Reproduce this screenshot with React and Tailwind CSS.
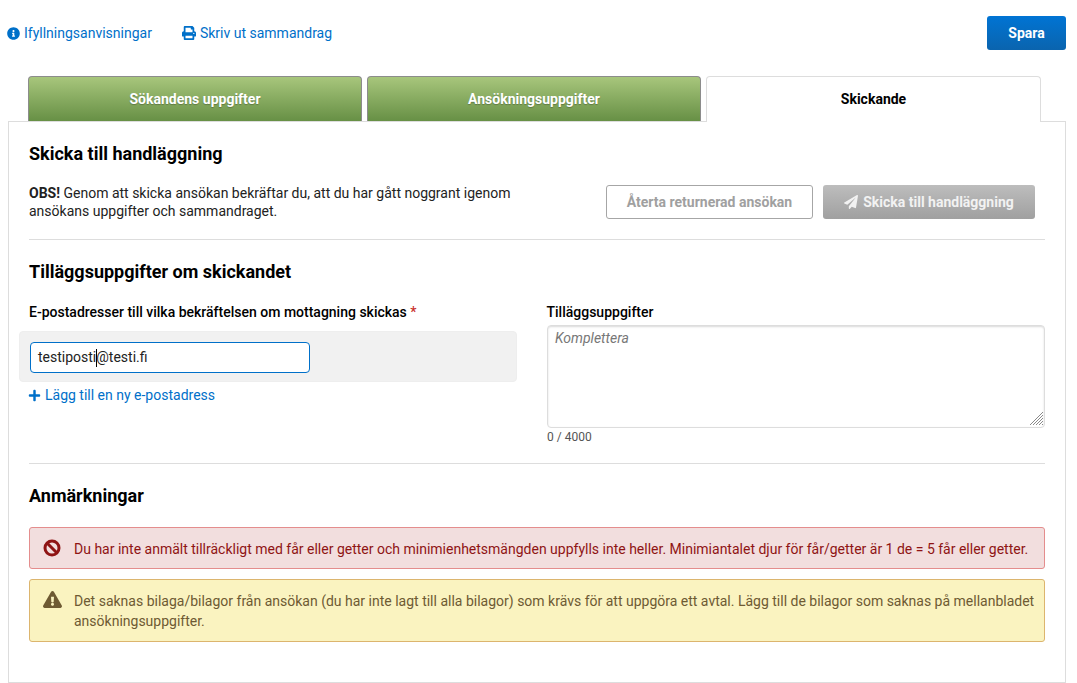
import React from 'react';
import { FaInfoCircle, FaPrint, FaPaperPlane, FaPlus, FaExclamationTriangle } from 'react-icons/fa';

const Tab = ({ children, active }) => (
    <div
        className={
            active
                ? 'relative z-10 flex h-[46px] w-[335px] items-center justify-center rounded-t border border-b-0 border-[#dddddd] bg-white text-[14px] font-bold text-black'
                : 'flex h-[45px] w-[334px] items-center justify-center rounded-t border border-b-0 border-[#8c8c8c] bg-gradient-to-b from-[#a8c67c] to-[#679045] text-[14px] font-bold text-white [text-shadow:0_1px_1px_rgba(0,0,0,0.25)]'
        }
    >
        {children}
    </div>
);

const App = () => {
    return (
        <div className="h-[683px] w-[1077px] overflow-hidden bg-white pl-2 pr-[11px] pt-4 font-['Roboto',sans-serif] text-[14px] text-[#222222]">
            <header className="flex h-[34px] items-center justify-between">
                <div className="flex items-center text-[#0070c9]">
                    <a className="-ml-px flex items-center gap-1">
                        <FaInfoCircle size={13} />
                        Ifyllningsanvisningar
                    </a>
                    <a className="ml-[30px] flex items-center gap-1">
                        <FaPrint size={14} />
                        Skriv ut sammandrag
                    </a>
                </div>
                <button className="h-[34px] w-[79px] rounded-[3px] bg-gradient-to-b from-[#0074d4] to-[#0a64ae] text-[14px] font-bold text-white">
                    Spara
                </button>
            </header>

            <nav className="ml-5 mt-[26px] flex gap-[5px]">
                <Tab>Sökandens uppgifter</Tab>
                <Tab>Ansökningsuppgifter</Tab>
                <Tab active>Skickande</Tab>
            </nav>

            <main className="-mt-px h-[562px] border border-[#dddddd] px-5">
                <h2 className="mt-[20px] text-[18px] font-bold leading-[24px] text-black">Skicka till handläggning</h2>
                <section className="mt-[17px] flex h-[52px] items-start justify-between">
                    <p className="w-[510px] pt-[1px] leading-[18px]">
                        <b className="font-bold">OBS!</b> Genom att skicka ansökan bekräftar du, att du har gått noggrant igenom
                        ansökans uppgifter och sammandraget.
                    </p>
                    <div className="mr-[10px] mt-[2px] flex gap-[10px]">
                        <button className="h-[34px] w-[207px] rounded-[3px] border border-[#a6a6a6] bg-white text-[14px] font-bold text-[#a0a0a0]">
                            Återta returnerad ansökan
                        </button>
                        <button className="flex h-[34px] w-[212px] items-center justify-center gap-[5px] rounded-[3px] bg-gradient-to-b from-[#bdbdbd] to-[#a0a0a0] text-[14px] font-bold text-[#f2f2f2]">
                            <FaPaperPlane size={14} />
                            Skicka till handläggning
                        </button>
                    </div>
                </section>
                <hr className="mt-[4px] border-[#dddddd]" />

                <h2 className="mt-5 text-[18px] font-bold leading-[24px] text-black">Tilläggsuppgifter om skickandet</h2>
                <section className="mt-[18px] flex h-[156px]">
                    <div className="w-[518px]">
                        <label className="block font-medium leading-[20px] text-black">
                            E-postadresser till vilka bekräftelsen om mottagning skickas <span className="text-[#c9302c]">*</span>
                        </label>
                        <div className="-ml-[10px] mt-[9px] h-[51px] w-[498px] rounded border border-[#eeeeee] bg-[#f1f1f1] px-[10px] py-[10px]">
                            <div className="flex h-[31px] w-[280px] items-center rounded border border-[#0070c9] bg-white px-[7px] text-[14px] text-[#222222]">
                                testiposti<span className="-mr-px h-[18px] w-px bg-black" />@testi.fi
                            </div>
                        </div>
                        <a className="mt-[3px] flex items-center gap-[4px] leading-[20px] text-[#0070c9]">
                            <FaPlus size={13} className="-ml-px" />
                            Lägg till en ny e-postadress
                        </a>
                    </div>
                    <div className="w-[498px]">
                        <label className="-ml-[0.5px] block font-medium leading-[20px] text-black">Tilläggsuppgifter</label>
                        <div className="relative mt-[3px] h-[103px]">
                            <textarea
                                readOnly
                                placeholder="Komplettera"
                                className="block h-[103px] w-[498px] resize-none rounded border border-[#dddddd] px-[7px] py-[2px] text-[14px] italic shadow-[inset_0_1px_2px_rgba(0,0,0,0.15)] placeholder:text-[#777777]"
                            />
                            <svg className="absolute bottom-[2px] right-[1px]" width="15" height="15" viewBox="0 0 15 15" stroke="#8a8a8a" strokeWidth="1">
                                <path d="M1 14 14 1M4 14 14 4M7 14 14 7M10 14 14 10M13 14 14 13" />
                            </svg>
                        </div>
                        <div className="mt-[1px] text-[12px] leading-[16px] text-[#555555]">0 / 4000</div>
                    </div>
                </section>
                <hr className="mt-[5px] border-[#dddddd]" />

                <h2 className="mt-[20px] text-[18px] font-bold leading-[24px] text-black">Anmärkningar</h2>
                <div className="mt-[19px] flex h-[42px] items-center gap-[13px] rounded-[3px] border border-[#e48d8d] bg-[#f2dede] pl-[13px] pt-[2px] text-[14px] text-[#8f1414]">
                    <svg className="-mt-[3px] shrink-0" width="18" height="18" viewBox="0 0 18 18" fill="none" stroke="currentColor" strokeWidth="3">
                        <circle cx="9" cy="9" r="7" />
                        <path d="M4 4 14 14" />
                    </svg>
                    Du har inte anmält tillräckligt med får eller getter och minimienhetsmängden uppfylls inte heller. Minimiantalet djur för får/getter är 1 de = 5 får eller getter.
                </div>
                <div className="mt-[10px] flex h-[63px] items-start gap-[12px] rounded-[3px] border border-[#dcb56e] bg-[#faf3c0] py-[11px] pl-[13px] pr-2 text-[14px] leading-[20px] text-[#6e5a33]">
                    <FaExclamationTriangle size={19} className="-mt-[1px] shrink-0" />
                    Det saknas bilaga/bilagor från ansökan (du har inte lagt till alla bilagor) som krävs för att uppgöra ett avtal. Lägg till de bilagor som saknas på mellanbladet ansökningsuppgifter.
                </div>
            </main>
        </div>
    );
};

export default App;
